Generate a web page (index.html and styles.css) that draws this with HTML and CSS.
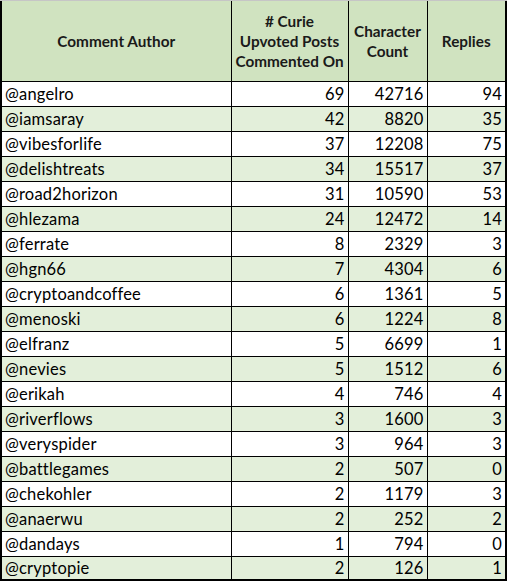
FILE: index.html
```html
<!DOCTYPE html>
<html>
<head>
<meta charset="utf-8">
<link rel="stylesheet" href="styles.css">
</head>
<body>
<table class="sheet">
  <colgroup>
    <col class="c-author"><col class="c-posts"><col class="c-chars"><col class="c-replies">
  </colgroup>
  <thead>
    <tr class="head">
      <th>Comment Author</th>
      <th># Curie<br>Upvoted Posts<br>Commented On</th>
      <th>Character<br>Count</th>
      <th>Replies</th>
    </tr>
  </thead>
  <tbody>
    <tr><td>@angelro</td><td class="n">69</td><td class="n">42716</td><td class="n">94</td></tr>
    <tr><td>@iamsaray</td><td class="n">42</td><td class="n">8820</td><td class="n">35</td></tr>
    <tr><td>@vibesforlife</td><td class="n">37</td><td class="n">12208</td><td class="n">75</td></tr>
    <tr><td>@delishtreats</td><td class="n">34</td><td class="n">15517</td><td class="n">37</td></tr>
    <tr><td>@road2horizon</td><td class="n">31</td><td class="n">10590</td><td class="n">53</td></tr>
    <tr><td>@hlezama</td><td class="n">24</td><td class="n">12472</td><td class="n">14</td></tr>
    <tr><td>@ferrate</td><td class="n">8</td><td class="n">2329</td><td class="n">3</td></tr>
    <tr><td>@hgn66</td><td class="n">7</td><td class="n">4304</td><td class="n">6</td></tr>
    <tr><td>@cryptoandcoffee</td><td class="n">6</td><td class="n">1361</td><td class="n">5</td></tr>
    <tr><td>@menoski</td><td class="n">6</td><td class="n">1224</td><td class="n">8</td></tr>
    <tr><td>@elfranz</td><td class="n">5</td><td class="n">6699</td><td class="n">1</td></tr>
    <tr><td>@nevies</td><td class="n">5</td><td class="n">1512</td><td class="n">6</td></tr>
    <tr><td>@erikah</td><td class="n">4</td><td class="n">746</td><td class="n">4</td></tr>
    <tr><td>@riverflows</td><td class="n">3</td><td class="n">1600</td><td class="n">3</td></tr>
    <tr><td>@veryspider</td><td class="n">3</td><td class="n">964</td><td class="n">3</td></tr>
    <tr><td>@battlegames</td><td class="n">2</td><td class="n">507</td><td class="n">0</td></tr>
    <tr><td>@chekohler</td><td class="n">2</td><td class="n">1179</td><td class="n">3</td></tr>
    <tr><td>@anaerwu</td><td class="n">2</td><td class="n">252</td><td class="n">2</td></tr>
    <tr><td>@dandays</td><td class="n">1</td><td class="n">794</td><td class="n">0</td></tr>
    <tr class="last"><td>@cryptopie</td><td class="n">2</td><td class="n">126</td><td class="n">1</td></tr>
  </tbody>
</table>
</body>
</html>
```

FILE: styles.css
```css
html {
  background: #c6c6c6;
}
body {
  margin: 0;
  padding-top: 1px;
  font-family: Lato, "Liberation Sans", sans-serif;
  color: #000;
}
.sheet {
  width: 507px;
  border-collapse: collapse;
  table-layout: fixed;
  background: #fff;
  border-left: 2px solid #000;
  border-right: 2px solid #000;
  border-bottom: 2px solid #000;
}
.c-author { width: 230px; }
.c-posts { width: 117px; }
.c-chars { width: 79px; }
.c-replies { width: 79px; }

.head th {
  background: #d0e3c0;
  height: 80px;
  padding: 0 1px;
  font-size: 15.3px;
  font-weight: bold;
  line-height: 20px;
  text-align: center;
  vertical-align: middle;
  border-left: 1px solid #000;
  border-bottom: 1px solid #000;
  color: #1a1a1a;
}
.head th:first-child { border-left: none; }

tbody td {
  height: 23px;
  padding: 1px 3px 0 3px;
  font-size: 16.5px;
  letter-spacing: 0.2px;
  line-height: 23px;
  border-left: 1px solid #000;
  border-top: 1px solid #000;
  white-space: nowrap;
  vertical-align: middle;
}
tbody td:first-child { border-left: none; }
tbody tr:first-child td { border-top: none; }
tbody tr:nth-child(even) td { background: #e3efda; }
tbody tr.last td { height: 21px; line-height: 21px; }
td.n { text-align: right; padding-right: 3px; }
```
